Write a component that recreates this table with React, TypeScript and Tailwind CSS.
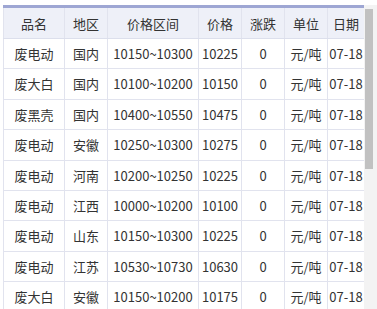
import React from 'react';

type Row = { name: string; area: string; range: string; price: string };

const rows: Row[] = [
  { name: '废电动', area: '国内', range: '10150~10300', price: '10225' },
  { name: '废大白', area: '国内', range: '10100~10200', price: '10150' },
  { name: '废黑壳', area: '国内', range: '10400~10550', price: '10475' },
  { name: '废电动', area: '安徽', range: '10250~10300', price: '10275' },
  { name: '废电动', area: '河南', range: '10200~10250', price: '10225' },
  { name: '废电动', area: '江西', range: '10000~10200', price: '10100' },
  { name: '废电动', area: '山东', range: '10150~10300', price: '10225' },
  { name: '废电动', area: '江苏', range: '10530~10730', price: '10630' },
  { name: '废大白', area: '安徽', range: '10150~10200', price: '10175' },
];

const headers = ['品名', '地区', '价格区间', '价格', '涨跌', '单位', '日期'];

const cell = 'border border-[#e1e3ee] text-center whitespace-nowrap p-0';

export default function App() {
  return (
    <div className="w-[377px] h-[309px] bg-white pt-[5px] pl-[3px] font-['Noto_Sans_CJK_SC','Noto_Sans',sans-serif] text-[13px] text-[#333]">
      <div className="relative h-[304px] w-[374px] overflow-hidden">
        <table className="w-[361px] table-fixed border-collapse border-t-[3px] border-t-[#9ea6d3]">
          <colgroup>
            <col className="w-[61px]" />
            <col className="w-[43px]" />
            <col className="w-[91px]" />
            <col className="w-[43px]" />
            <col className="w-[43px]" />
            <col className="w-[43px]" />
            <col className="w-[37px]" />
          </colgroup>
          <thead>
            <tr className="h-[32px] bg-[#eef0f8]">
              {headers.map((h) => (
                <th key={h} className={`${cell} font-normal pt-[2px] border-t-[#9ea6d3] border-b-[#dcdfec]`}>
                  {h}
                </th>
              ))}
            </tr>
          </thead>
          <tbody>
            {rows.map((r, i) => (
              <tr key={i} className="h-[30.4px]">
                <td className={cell}>{r.name}</td>
                <td className={cell}>{r.area}</td>
                <td className={cell}>{r.range}</td>
                <td className={cell}>{r.price}</td>
                <td className={cell}>0</td>
                <td className={cell}>元/吨</td>
                <td className={cell}>07-18</td>
              </tr>
            ))}
          </tbody>
        </table>

        {/* scrollbar */}
        <div className="absolute right-0 top-0 h-full w-[13px] bg-[#f3f3f3] pl-[1px] pt-[4px]">
          <div className="h-[160px] w-[8px] bg-[#c1c1c1]" />
        </div>
      </div>
    </div>
  );
}
